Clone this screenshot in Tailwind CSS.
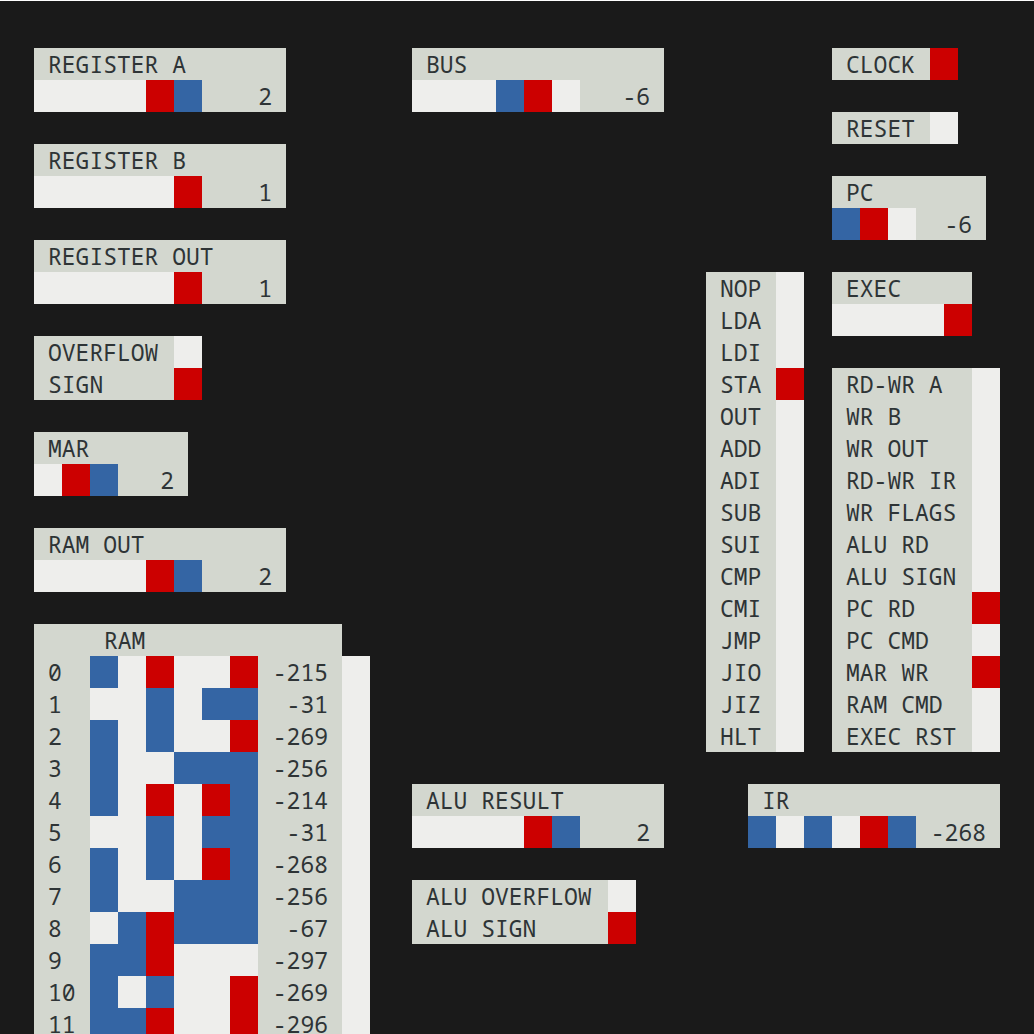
<!DOCTYPE html>
<html lang="en">
<head>
<meta charset="utf-8">
<meta name="viewport" content="width=device-width, initial-scale=1">
<title>Ternary CPU monitor</title>
<script src="https://cdn.jsdelivr.net/npm/@tailwindcss/browser@4"></script>
</head>
<body class="bg-[#1a1a1a]">
<main class="grid h-screen grid-cols-[336px_252px_294px] grid-rows-[auto_1fr] content-start justify-between gap-y-8 overflow-hidden border-t border-white px-[34px] pt-[47px] font-['Noto_Sans_Mono','DejaVu_Sans_Mono',monospace] text-[23px] leading-8 text-[#2e3436]">
  <div class="row-span-2 flex flex-col items-start gap-8">
    <section data-register="REGISTER A" data-trits="....+-" data-value="2" class="w-[252px] bg-[#d3d7cf]"></section>
    <section data-register="REGISTER B" data-trits=".....+" data-value="1" class="w-[252px] bg-[#d3d7cf]"></section>
    <section data-register="REGISTER OUT" data-trits=".....+" data-value="1" class="w-[252px] bg-[#d3d7cf]"></section>
    <ul data-lamps="OVERFLOW,SIGN" data-lit="SIGN" class="w-[168px] bg-[#d3d7cf]"></ul>
    <section data-register="MAR" data-trits=".+-" data-value="2" class="w-[154px] bg-[#d3d7cf]"></section>
    <section data-register="RAM OUT" data-trits="....+-" data-value="2" class="w-[252px] bg-[#d3d7cf]"></section>
    <table class="w-[336px] table-fixed border-collapse">
      <colgroup><col class="w-14"><col class="w-[168px]"><col class="w-[84px]"><col class="w-7"></colgroup>
      <thead>
        <tr class="h-8"><th class="bg-[#d3d7cf] p-0"></th><th colspan="2" class="bg-[#d3d7cf] py-0 pr-0 pl-3.5 text-left font-normal">RAM</th><td class="p-0"></td></tr>
      </thead>
      <tbody id="ram"></tbody>
    </table>
  </div>

  <div>
    <section data-register="BUS" data-trits="...-+." data-value="-6" class="w-[252px] bg-[#d3d7cf]"></section>
  </div>

  <div class="flex items-end justify-between">
    <ul data-lamps="NOP,LDA,LDI,STA,OUT,ADD,ADI,SUB,SUI,CMP,CMI,JMP,JIO,JIZ,HLT" data-lit="STA" class="w-[98px] bg-[#d3d7cf]"></ul>
    <div class="flex w-[168px] flex-col items-start gap-8">
      <ul data-lamps="CLOCK" data-lit="CLOCK" class="w-[126px] bg-[#d3d7cf]"></ul>
      <ul data-lamps="RESET" data-lit="" class="w-[126px] bg-[#d3d7cf]"></ul>
      <section data-register="PC" data-trits="-+." data-value="-6" class="w-[154px] bg-[#d3d7cf]"></section>
      <section data-register="EXEC" data-trits="....+" data-value="" class="w-[140px] bg-[#d3d7cf]"></section>
      <ul data-lamps="RD-WR A,WR B,WR OUT,RD-WR IR,WR FLAGS,ALU RD,ALU SIGN,PC RD,PC CMD,MAR WR,RAM CMD,EXEC RST" data-lit="PC RD,MAR WR" class="w-[168px] bg-[#d3d7cf]"></ul>
    </div>
  </div>

  <div class="flex flex-col items-start gap-8">
    <section data-register="ALU RESULT" data-trits="....+-" data-value="2" class="w-[252px] bg-[#d3d7cf]"></section>
    <ul data-lamps="ALU OVERFLOW,ALU SIGN" data-lit="ALU SIGN" class="w-[224px] bg-[#d3d7cf]"></ul>
  </div>

  <div class="flex items-start justify-end">
    <section data-register="IR" data-trits="-.-.+-" data-value="-268" class="w-[252px] bg-[#d3d7cf]"></section>
  </div>
</main>

<script>
  // Balanced ternary digits: "+" is red, "-" is blue, "." is zero.
  const cells = {
    '+': '<i class="h-8 w-7 shrink-0 bg-[#cc0000]"></i>',
    '-': '<i class="h-8 w-7 shrink-0 bg-[#3465a4]"></i>',
    '.': '<i class="h-8 w-7 shrink-0 bg-[#eeeeec]"></i>',
  };
  const trits = (word) => [...word].map((t) => cells[t]).join('');

  document.querySelectorAll('[data-register]').forEach((el) => {
    const { register, trits: word, value } = el.dataset;
    el.innerHTML = `<h2 class="h-8 pl-3.5">${register}</h2>` +
      `<div class="flex h-8">${trits(word)}` +
      (value ? `<output class="flex-1 pr-3.5 text-right">${value}</output>` : '') + '</div>';
  });

  document.querySelectorAll('[data-lamps]').forEach((el) => {
    const lit = el.dataset.lit.split(',');
    el.innerHTML = el.dataset.lamps.split(',').map((name) =>
      `<li class="flex h-8 justify-between pl-3.5 whitespace-nowrap"><span>${name}</span>${cells[lit.includes(name) ? '+' : '.']}</li>`).join('');
  });

  const memory = [
    ['-.+..+', -215], ['..-.--', -31], ['-.-..+', -269], ['-..---', -256],
    ['-.+.+-', -214], ['..-.--', -31], ['-.-.+-', -268], ['-..---', -256],
    ['.-+---', -67], ['--+...', -297], ['-.-..+', -269], ['--+..+', -296],
  ];
  document.getElementById('ram').innerHTML = memory.map(([word, value], address) =>
    `<tr class="h-8"><th class="bg-[#d3d7cf] py-0 pr-0 pl-3.5 text-left font-normal">${address}</th>` +
    `<td class="p-0"><div class="flex h-8">${trits(word)}</div></td>` +
    `<td class="bg-[#d3d7cf] py-0 pr-3.5 pl-0 text-right whitespace-nowrap">${value}</td>` +
    `<td class="bg-[#eeeeec] p-0"></td></tr>`).join('');
</script>
</body>
</html>
